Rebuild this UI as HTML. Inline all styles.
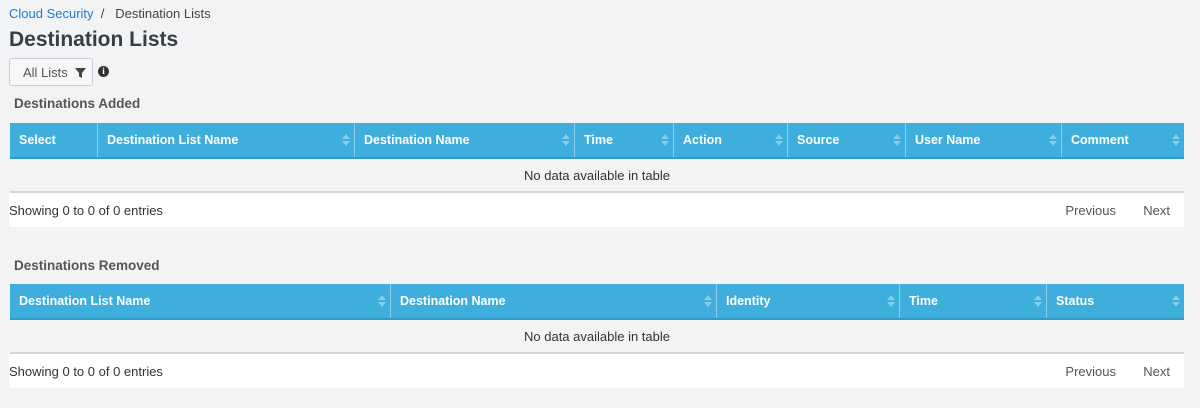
<!DOCTYPE html>
<html><head><style>
body{margin:0;width:1200px;height:408px;background:#f2f3f5;font-family:"Liberation Sans",sans-serif;position:relative;overflow:hidden;color:#333}
.a{position:absolute}
.bc{left:9px;top:6px;font-size:13px;color:#444}
.bc span{color:#1a7bd0}
h1{position:absolute;left:9px;top:28px;margin:0;font-size:21px;font-weight:bold;color:#3a3d42}
.btn{left:9px;top:58px;width:84px;height:28px;border:1px solid #ccd;border-radius:3px;background:#f7f7f8;font-size:13px;color:#555;line-height:27px;box-sizing:border-box;padding-left:13px}
.info{left:98px;top:66px;width:11px;height:11px;border-radius:50%;background:#333;color:#fff;font-size:9px;font-weight:bold;text-align:center;line-height:11px;font-family:"Liberation Serif",serif}
.st{left:14px;font-size:13.5px;font-weight:bold;color:#555}
.hdr{position:absolute;left:10px;width:1174px;height:36px;background:#3eaedd;border-bottom:2px solid #2f9ccb;box-sizing:border-box}
.hdr div{position:absolute;top:0;height:34px;border-left:1px solid #8dcdea;color:#fff;font-weight:bold;font-size:12.5px;line-height:35px;padding-left:9px;box-sizing:border-box}
.hdr div:first-child{border-left:none}
.hdr i{position:absolute;right:8px;top:11px;width:0;height:0}
.hdr i:before{content:"";position:absolute;left:-4px;top:0;border:4px solid transparent;border-top:none;border-bottom:5px solid #8ccbe6}
.hdr i:after{content:"";position:absolute;left:-4px;top:7px;border:4px solid transparent;border-bottom:none;border-top:5px solid #8ccbe6}
.nd{position:absolute;left:10px;width:1174px;height:32px;border-bottom:2px solid #d6d6d6;text-align:center;font-size:13px;line-height:33px;color:#333}
.ft{position:absolute;left:9px;width:1175px;height:34px;background:#fff;font-size:13px;line-height:35px;color:#333}
.ft .p{position:absolute;right:68px;color:#555}
.ft .n{position:absolute;right:14px;color:#555}
</style></head><body>
<div class="a bc"><span>Cloud Security</span> &nbsp;/&nbsp;&nbsp; Destination Lists</div>
<h1>Destination Lists</h1>
<div class="a btn">All Lists&nbsp; <svg width="11" height="10" viewBox="0 0 11 10" style="vertical-align:-1px"><path d="M0 0H11L7 5V10L4 8.5V5Z" fill="#444"/></svg></div>
<div class="a info">i</div>
<div class="a st" style="top:96px">Destinations Added</div>
<div class="hdr" style="top:123px">
<div style="left:0;width:87px">Select</div>
<div style="left:87px;width:257px">Destination List Name<i></i></div>
<div style="left:344px;width:220px">Destination Name<i></i></div>
<div style="left:564px;width:99px">Time<i></i></div>
<div style="left:663px;width:114px">Action<i></i></div>
<div style="left:777px;width:118px">Source<i></i></div>
<div style="left:895px;width:156px">User Name<i></i></div>
<div style="left:1051px;width:123px">Comment<i></i></div>
</div>
<div class="nd" style="top:159px">No data available in table</div>
<div class="ft" style="top:193px">Showing 0 to 0 of 0 entries<span class="p">Previous</span><span class="n">Next</span></div>
<div class="a st" style="top:258px">Destinations Removed</div>
<div class="hdr" style="top:284px">
<div style="left:0;width:380px">Destination List Name<i></i></div>
<div style="left:380px;width:326px">Destination Name<i></i></div>
<div style="left:706px;width:183px">Identity<i></i></div>
<div style="left:889px;width:147px">Time<i></i></div>
<div style="left:1036px;width:138px">Status<i></i></div>
</div>
<div class="nd" style="top:320px">No data available in table</div>
<div class="ft" style="top:354px">Showing 0 to 0 of 0 entries<span class="p">Previous</span><span class="n">Next</span></div>
</body></html>
